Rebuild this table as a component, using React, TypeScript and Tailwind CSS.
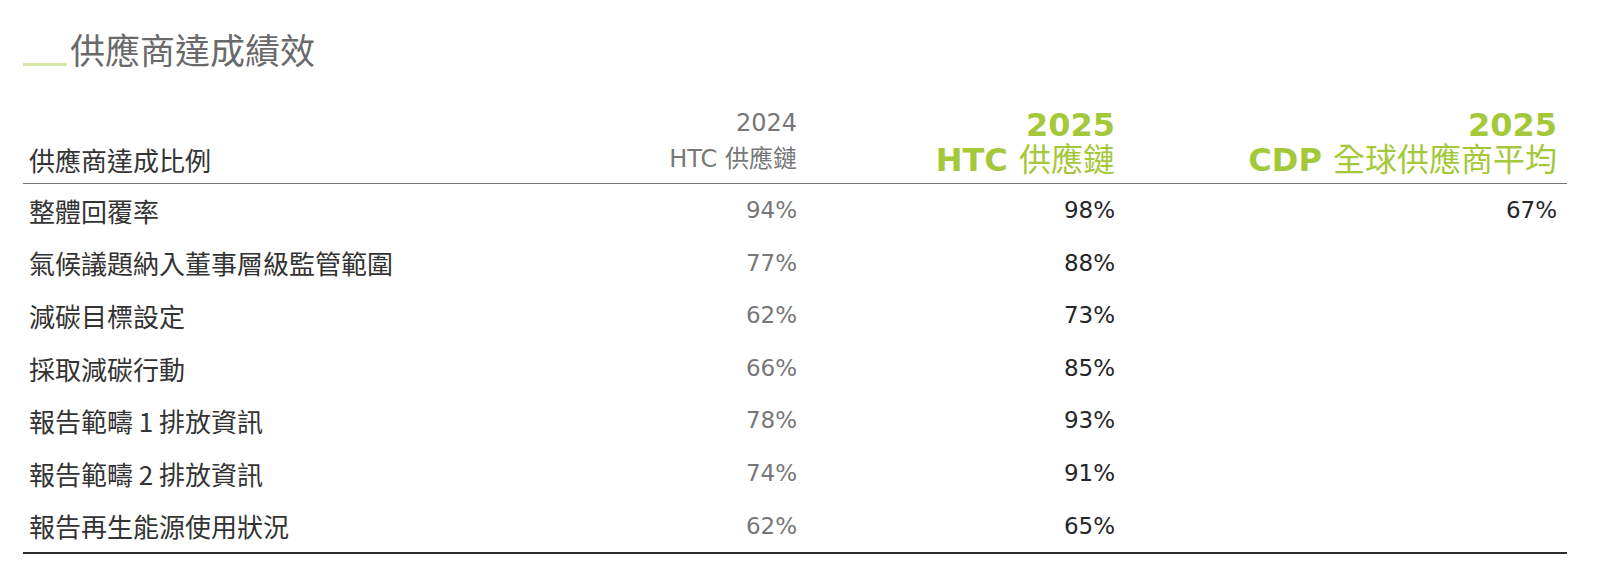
import React from 'react';

const rows: [string, string, string, string][] = [
  ['整體回覆率', '94%', '98%', '67%'],
  ['氣候議題納入董事層級監管範圍', '77%', '88%', ''],
  ['減碳目標設定', '62%', '73%', ''],
  ['採取減碳行動', '66%', '85%', ''],
  ['報告範疇 1 排放資訊', '78%', '93%', ''],
  ['報告範疇 2 排放資訊', '74%', '91%', ''],
  ['報告再生能源使用狀況', '62%', '65%', ''],
];

const cjk = "font-['Noto_Sans_CJK_TC',sans-serif]";
const num = "font-['DejaVu_Sans','Noto_Sans_CJK_TC',sans-serif]";
const cols = 'grid grid-cols-[574px_200px_318px_447px]';

export default function App() {
  return (
    <div className={`w-[1604px] h-[577px] bg-white ${cjk}`}>
      <div className="flex items-end pl-[23px] pt-[27px]">
        <div className="w-[44px] h-[3px] bg-[#d6e8a3] mb-[5px]" />
        <h1 className="ml-[3px] text-[35px] leading-[44px] text-[#6a6a6a] font-normal">供應商達成績效</h1>
      </div>

      <div className="ml-[23px] w-[1544px] mt-[35px]">
        <div className={`${cols} items-end pb-[7px] border-b-[1.5px] border-[#777]`}>
          <div className="pl-[6px] text-[26px] leading-[32px] text-[#333]">供應商達成比例</div>
          <div className="text-right text-[24px] leading-[34px] text-[#777]">
            <div className={num}>2024</div>
            <div><span className={num}>HTC </span>供應鏈</div>
          </div>
          <div className="text-right text-[32px] leading-[32px] text-[#a3c83a]">
            <div className={`${num} font-bold`}>2025</div>
            <div><span className={`${num} font-bold`}>HTC </span>供應鏈</div>
          </div>
          <div className="text-right pr-[5px] text-[32px] leading-[32px] text-[#a3c83a]">
            <div className={`${num} font-bold`}>2025</div>
            <div><span className={`${num} font-bold`}>CDP </span>全球供應商平均</div>
          </div>
        </div>

        <div className="border-b-2 border-[#2b2b2b]">
          {rows.map(([label, a, b, c]) => (
            <div key={label} className={`${cols} h-[52.6px] items-center`}>
              <div className="pl-[6px] text-[26px] text-[#333]">{label}</div>
              <div className={`text-right text-[23px] text-[#777] ${num}`}>{a}</div>
              <div className={`text-right text-[23px] text-[#262626] ${num}`}>{b}</div>
              <div className={`text-right pr-[5px] text-[23px] text-[#262626] ${num}`}>{c}</div>
            </div>
          ))}
        </div>
      </div>
    </div>
  );
}
